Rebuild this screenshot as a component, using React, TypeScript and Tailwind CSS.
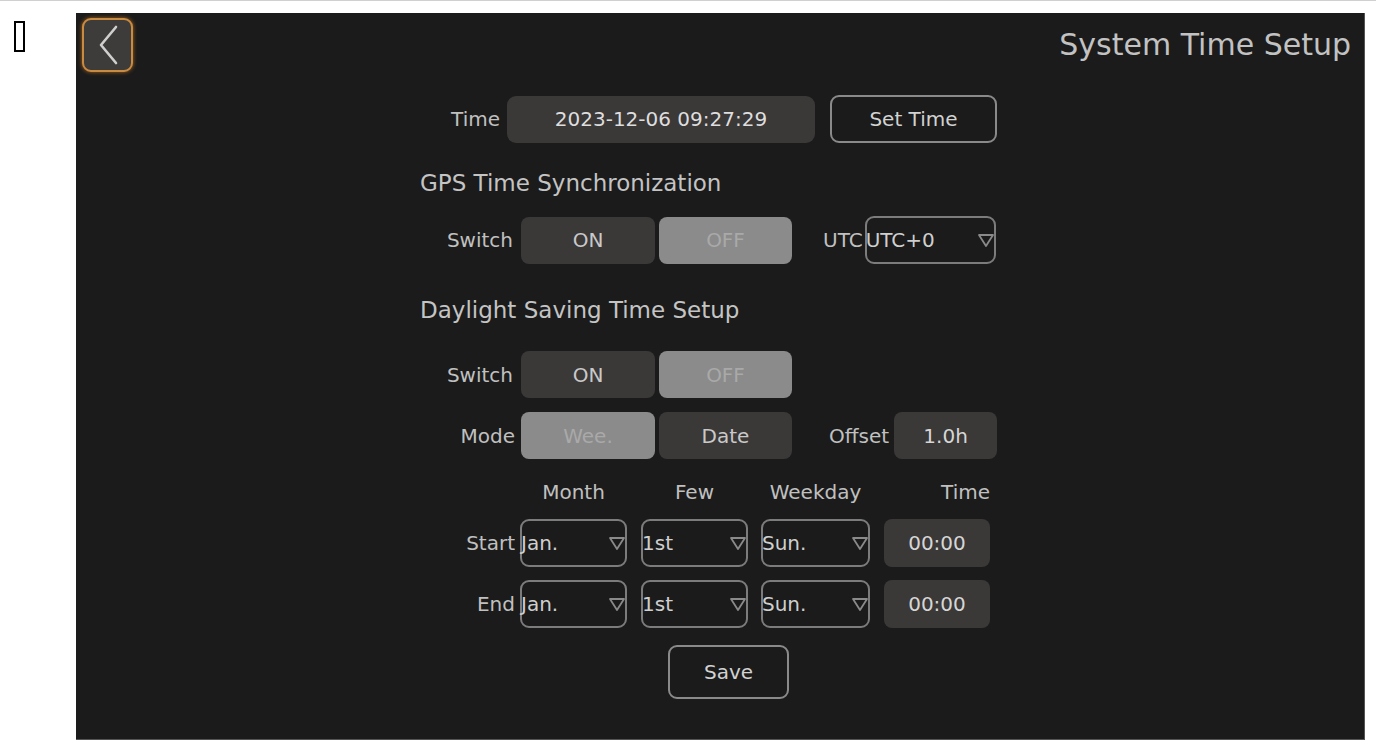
import React from "react";

const font = { fontFamily: '"DejaVu Sans", "Liberation Sans", sans-serif' };

function Caret() {
  return (
    <svg width="18" height="16" viewBox="0 0 18 16" className="-mr-[3px] shrink-0">
      <path d="M2 3 L16 3 L9 14 Z" fill="none" stroke="#8a8a8a" strokeWidth="1.8" strokeLinejoin="round" />
    </svg>
  );
}

function Select({ value, width }: { value: string; width: string }) {
  return (
    <div
      className={`flex h-[48px] ${width} items-center justify-between rounded-[9px] border-2 border-[#7c7c7c] pr-[2px] text-[20px] text-[#cfcfcf]`}
    >
      <span className="-ml-[1px]">{value}</span>
      <Caret />
    </div>
  );
}

function Toggle({ left, right, active }: { left: string; right: string; active: "left" | "right" }) {
  const on = "bg-[#8b8b8b] text-[#a9a9a9]";
  const off = "bg-[#3b3838] text-[#c9c9c9]";
  return (
    <div className="flex gap-[4px]">
      <div className={`flex h-[47px] w-[134px] items-center justify-center rounded-[8px] ${active === "left" ? on : off}`}>
        {left}
      </div>
      <div className={`flex h-[47px] w-[133px] items-center justify-center rounded-[8px] ${active === "right" ? on : off}`}>
        {right}
      </div>
    </div>
  );
}

function Label({ children, width }: { children: React.ReactNode; width: string }) {
  return <div className={`${width} shrink-0 text-right text-[#c0c0c0]`}>{children}</div>;
}

export default function App() {
  return (
    <div className="flex min-h-screen border-t border-[#d0d0d0] bg-white" style={font}>
      <div className="ml-[14px] mt-[20px] h-[31px] w-[11px] shrink-0 border-2 border-black" />

      <div className="ml-[51px] mt-[12px] flex h-[727px] w-[1289px] flex-col border-b border-r border-[#555] bg-[#1b1b1b] text-[20px]">
        <div className="flex items-start justify-between pl-[6px] pr-[13px] pt-[5px]">
          <button className="flex h-[54px] w-[51px] items-center justify-center rounded-[9px] border-2 border-[#c98b40] bg-[#3e3c3a] shadow-[0_0_4px_#a8641f]">
            <svg width="26" height="42" viewBox="0 0 26 42">
              <path d="M21 3 L6 21 L21 39" fill="none" stroke="#cfcfcf" strokeWidth="2.6" strokeLinecap="round" strokeLinejoin="round" />
            </svg>
          </button>
          <div className="mt-[9px] text-[30px] leading-[36px] text-[#c2c2c2]">System Time Setup</div>
        </div>

        <div className="ml-[344px] mt-[23px] flex flex-col">
          <div className="flex items-center">
            <Label width="w-[80px]">Time</Label>
            <div className="ml-[7px] flex h-[47px] w-[308px] items-center justify-center rounded-[9px] bg-[#3b3838] text-[#dedede]">
              2023-12-06 09:27:29
            </div>
            <div className="ml-[15px] flex h-[48px] w-[167px] items-center justify-center rounded-[9px] border-2 border-[#8a8a8a] text-[#d2d2d2]">
              Set Time
            </div>
          </div>

          <div className="mt-[26px] text-[23px] leading-[28px] text-[#c4c4c4]">GPS Time Synchronization</div>

          <div className="mt-[19px] flex items-center">
            <Label width="w-[93px]">Switch</Label>
            <div className="ml-[8px]">
              <Toggle left="ON" right="OFF" active="right" />
            </div>
            <div className="ml-[31px] text-[#c0c0c0]">UTC</div>
            <div className="ml-[2px]">
              <Select value="UTC+0" width="w-[131px]" />
            </div>
          </div>

          <div className="mt-[32px] text-[23px] leading-[28px] text-[#c4c4c4]">Daylight Saving Time Setup</div>

          <div className="mt-[27px] flex items-center">
            <Label width="w-[93px]">Switch</Label>
            <div className="ml-[8px]">
              <Toggle left="ON" right="OFF" active="right" />
            </div>
          </div>

          <div className="mt-[14px] flex items-center">
            <Label width="w-[95px]">Mode</Label>
            <div className="ml-[6px]">
              <Toggle left="Wee." right="Date" active="left" />
            </div>
            <div className="ml-[37px] text-[#c0c0c0]">Offset</div>
            <div className="ml-[5px] flex h-[47px] w-[103px] items-center justify-center rounded-[8px] bg-[#3b3838] text-[#d6d6d6]">
              1.0h
            </div>
          </div>

          <div className="mt-[21px] flex items-center leading-[24px] text-[#c0c0c0]">
            <div className="w-[100px] shrink-0" />
            <div className="w-[107px] text-center">Month</div>
            <div className="ml-[14px] w-[107px] text-center">Few</div>
            <div className="ml-[13px] w-[109px] text-center">Weekday</div>
            <div className="ml-[14px] w-[106px] text-right">Time</div>
          </div>

          {["Start", "End"].map((row, i) => (
            <div key={row} className={`flex items-center ${i === 0 ? "mt-[15px]" : "mt-[13px]"}`}>
              <Label width="w-[95px]">{row}</Label>
              <div className="ml-[5px] flex items-center">
                <Select value="Jan." width="w-[107px]" />
                <div className="ml-[14px]">
                  <Select value="1st" width="w-[107px]" />
                </div>
                <div className="ml-[13px]">
                  <Select value="Sun." width="w-[109px]" />
                </div>
                <div className="ml-[14px] flex h-[48px] w-[106px] items-center justify-center rounded-[8px] bg-[#3b3838] text-[#d6d6d6]">
                  00:00
                </div>
              </div>
            </div>
          ))}

          <div className="ml-[248px] mt-[17px] flex h-[54px] w-[121px] items-center justify-center rounded-[9px] border-2 border-[#8a8a8a] text-[#d2d2d2]">
            Save
          </div>
        </div>
      </div>
    </div>
  );
}
